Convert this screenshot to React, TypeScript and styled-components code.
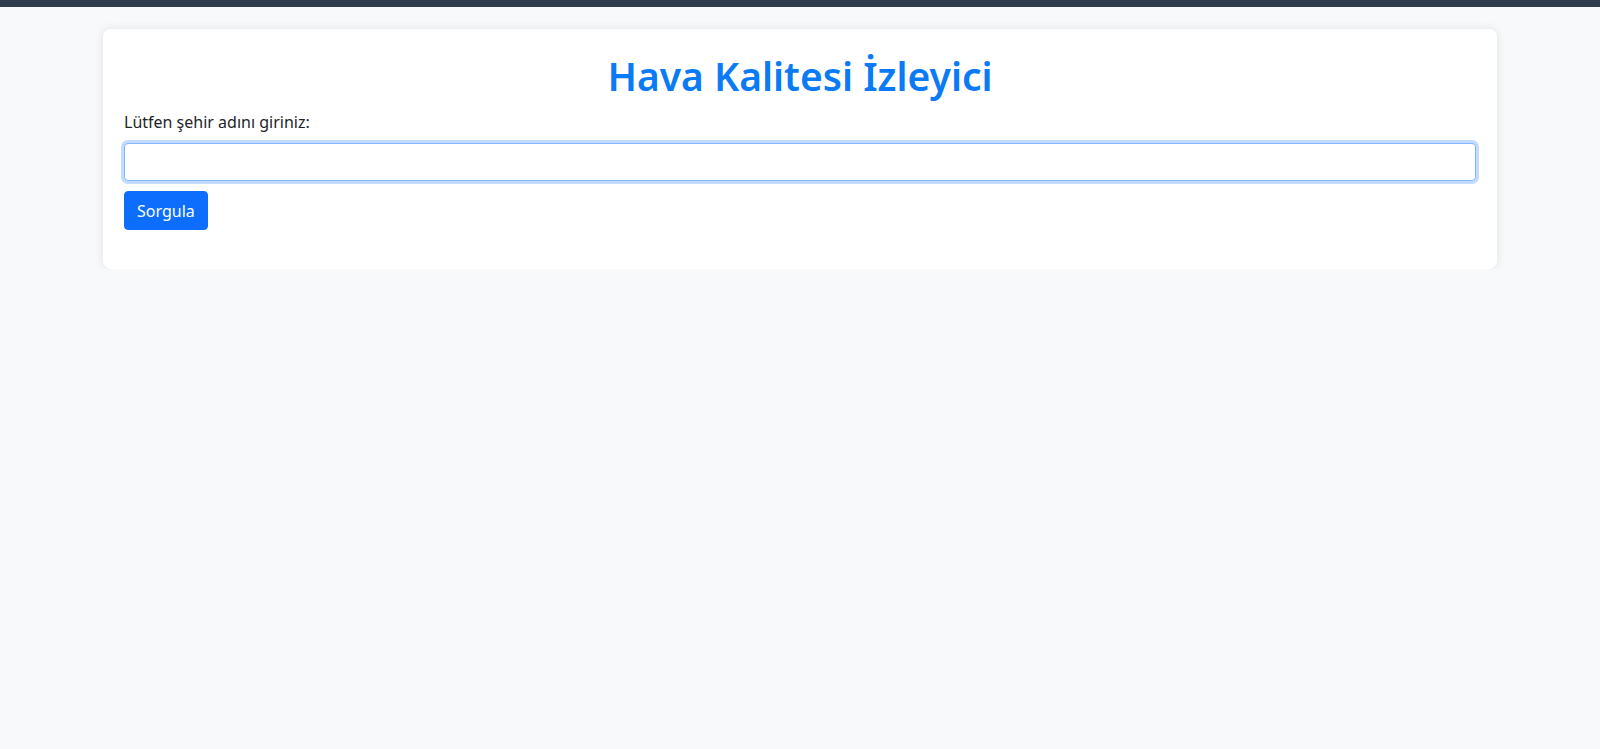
import React from "react";
import styled, { createGlobalStyle } from "styled-components";

const GlobalStyle = createGlobalStyle`
  *, *::before, *::after { box-sizing: border-box; }
  html, body { margin: 0; padding: 0; }
  body {
    background: #f8f9fa;
    font-family: "Noto Sans", "Open Sans", sans-serif;
    font-size: 16px;
    line-height: 1.5;
    color: #212529;
    border-top: 7px solid #2f3c4b;
  }
`;

const Page = styled.div`
  padding: 22px 103px 0;
`;

const Card = styled.main`
  background: #ffffff;
  border-radius: 8px;
  box-shadow: 0 0 10px rgba(0, 0, 0, 0.1);
  padding: 23px 21px 23px;
`;

const Title = styled.h1`
  margin: 0 0 10px;
  text-align: center;
  color: #0a7bf5;
  font-size: 39px;
  font-weight: 600;
  line-height: 48px;
`;

const Form = styled.form`
  display: flex;
  flex-direction: column;
  align-items: flex-start;
  margin-bottom: 16px;
`;

const Label = styled.label`
  display: block;
  margin-bottom: 9px;
  font-size: 16px;
  color: #212529;
`;

const Input = styled.input`
  display: block;
  width: 100%;
  height: 38px;
  padding: 6px 12px;
  font: inherit;
  color: #212529;
  background: #fff;
  border: 1px solid #86b7fe;
  border-radius: 4px;
  outline: none;
  box-shadow: 0 0 0 3px rgba(13, 110, 253, 0.25);
  margin-bottom: 10px;
`;

const Button = styled.button`
  display: inline-flex;
  align-items: center;
  height: 39px;
  padding: 0 12px;
  font: inherit;
  line-height: 1.5;
  color: #fff;
  background: #0d6efd;
  border: 1px solid #0d6efd;
  border-radius: 4px;
  cursor: pointer;
`;

export default function App() {
  return (
    <>
      <GlobalStyle />
      <Page>
        <Card>
          <Title>Hava Kalitesi İzleyici</Title>
          <Form onSubmit={(e) => e.preventDefault()}>
            <Label htmlFor="city">Lütfen şehir adını giriniz:</Label>
            <Input id="city" type="text" />
            <Button type="submit">Sorgula</Button>
          </Form>
        </Card>
      </Page>
    </>
  );
}
